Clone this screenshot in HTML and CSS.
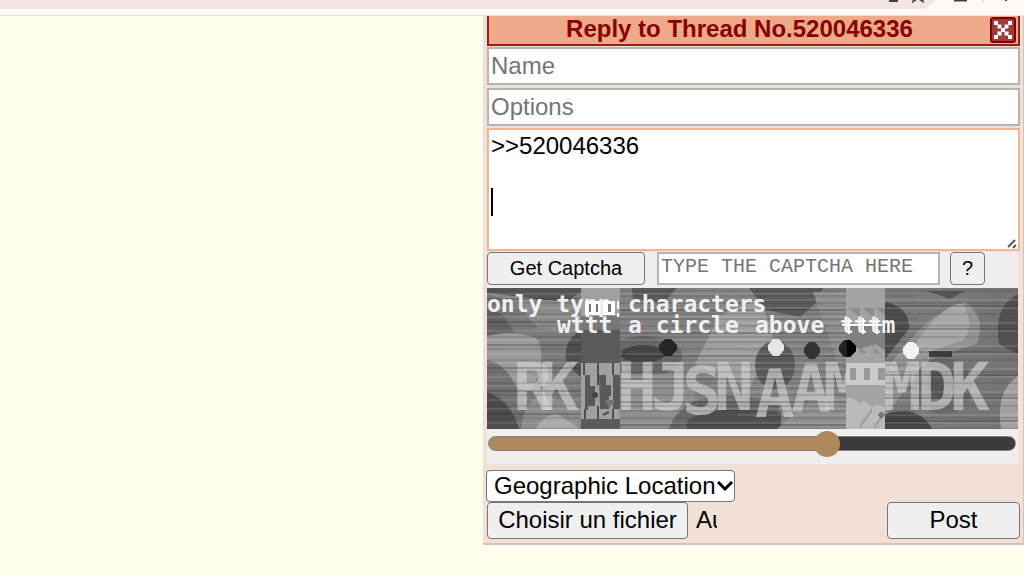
FILE: index.html
```
<!DOCTYPE html>
<html lang="en">

<head>
  <meta charset="UTF-8">
  <meta name="viewport" content="width=device-width, initial-scale=1.0">
  <title>Reply to Thread</title>
  <link rel="stylesheet" href="styles.css">
</head>

<body>

  <!-- Browser toolbar -->
  <header class="toolbar">
    <div class="address-bar">
      <svg class="toolbar-icon" viewBox="0 0 16 16" aria-hidden="true">
        <path d="M1 2v9h6M7 5h7v9H7zM10 11l2-3" />
      </svg>
      <svg class="toolbar-icon" viewBox="0 0 16 16" aria-hidden="true">
        <path d="M8 1l2 5h5l-4 3 1.500 5L8 11l-4.500 3L5 9 1 6h5z" />
      </svg>
    </div>
    <svg class="toolbar-icon" viewBox="0 0 16 16" aria-hidden="true">
      <path d="M3 3v10.500h11V3" />
    </svg>
    <span class="toolbar-divider"></span>
    <svg class="toolbar-icon" viewBox="0 0 16 16" aria-hidden="true">
      <path d="M8 3v11" />
    </svg>
  </header>

  <!-- Quick reply window -->
  <main class="page">
    <form class="quick-reply">
      <div class="reply-header">
        <h1>Reply to Thread No.520046336</h1>
        <button type="button" class="close-button" aria-label="Close">
          <svg viewBox="0 0 26 26" aria-hidden="true">
            <rect x="1" y="1" width="24" height="24" rx="2" fill="#a03a3a" stroke="#800000" stroke-width="2" />
            <path d="M4 4h4v4H4zM18 4h4v4h-4zM7.500 7.500h4v4h-4zM14.500 7.500h4v4h-4zM11 11h4v4h-4zM7.500 14.500h4v4h-4zM14.500 14.500h4v4h-4zM4 18h4v4H4zM18 18h4v4h-4z" fill="#fff" />
          </svg>
        </button>
      </div>

      <input class="field" type="text" placeholder="Name" aria-label="Name">
      <input class="field" type="text" placeholder="Options" aria-label="Options">

      <div class="comment-box">
        <textarea class="comment" aria-label="Comment">&gt;&gt;520046336

</textarea>
        <span class="caret"></span>
        <svg class="grip" viewBox="0 0 10 10" aria-hidden="true">
          <path d="M1 8L8 1M6 9l3-3" />
        </svg>
      </div>

      <!-- Captcha -->
      <div class="captcha">
        <div class="captcha-controls">
          <button type="button" class="button get-captcha">Get Captcha</button>
          <input class="captcha-input" type="text" placeholder="TYPE THE CAPTCHA HERE" aria-label="Captcha">
          <button type="button" class="button help-button">?</button>
        </div>

        <svg class="captcha-image" viewBox="0 0 531 141" role="img" aria-label="Captcha image">
          <defs>
            <linearGradient id="base" x1="0" y1="0" x2="1" y2="0">
              <stop offset="0" stop-color="#777" />
              <stop offset="0.5" stop-color="#858585" />
              <stop offset="1" stop-color="#737373" />
            </linearGradient>
            <pattern id="lines" width="531" height="23" patternUnits="userSpaceOnUse">
              <path d="M0 3h531M130 8h300M0 15h531" stroke="#333" stroke-opacity="0.300" />
              <path d="M0 6h360M250 12h281M0 20h531" stroke="#ddd" stroke-opacity="0.250" />
              <path d="M0 11h130M360 18h171M130 22h230" stroke="#222" stroke-opacity="0.250" stroke-width="2" />
            </pattern>
            <pattern id="teeth" x="359" y="0" width="14" height="30" patternUnits="userSpaceOnUse">
              <path d="M0 0l14 10v20L0 18z" fill="#8d8d8d" />
            </pattern>
          </defs>

          <rect width="531" height="141" fill="url(#base)" />

          <!-- Terrain -->
          <g opacity="0.850">
            <path d="M0 0h100l-18 12H55L0 5z" fill="#505050" />
            <path d="M0 5l30 12 22 24 42 3V15L75 14z" fill="#8d8d8d" />
            <path d="M0 18l15 8 15 22-30 4z" fill="#606060" />
            <path d="M0 48q36-8 52 5 8 30-10 50L0 92z" fill="#a0a0a0" />
            <path d="M0 72q20 4 32 32l20 37H0z" fill="#707070" />
            <path d="M0 104q24 8 32 37H0z" fill="#454545" />
            <path d="M94 42q-20 12-14 35l14 12z" fill="#494949" />
            <path d="M34 141q4-32 24-34l36 14v20z" fill="#909090" />
            <path d="M48 141q12-18 24-14l22 14z" fill="#b0b0b0" />
            <path d="M133 0h70l30 22 26 18-40 36h-86z" fill="#828282" />
            <path d="M145 0h45l-14 15-30-4z" fill="#555" />
            <ellipse cx="157" cy="68" rx="38" ry="20" fill="#656565" />
            <ellipse cx="156" cy="66" rx="22" ry="9" fill="#3c3c3c" />
            <path d="M133 86h60l16 22-24 33h-52z" fill="#929292" />
            <path d="M208 76l24-48 42-18 12 40-23 50z" fill="#a3a3a3" />
            <path d="M262 0h74l-8 16-15 13-34-7z" fill="#555" />
            <path d="M326 4h34v70h-10z" fill="#8f8f8f" />
            <path d="M182 141q8-28 50-34l60 5v29z" fill="#656565" />
            <path d="M200 133q25-18 94-8v16h-94z" fill="#474747" />
            <ellipse cx="288" cy="77" rx="20" ry="24" fill="#555" />
            <path d="M290 141l40-36 29 4v32z" fill="#929292" />
            <path d="M398 0h26l60 6-60 66-26 10z" fill="#7c7c7c" />
            <path d="M398 14q25 5 24 27l-24 30z" fill="#454545" />
            <path d="M398 84q40-60 80-70 22 14 12 42l-46 14-46 58z" fill="#999" />
            <path d="M427 57q35-47 50-40 10 20 0 35l-40 14z" fill="#b0b0b0" />
            <ellipse cx="456" cy="98" rx="30" ry="28" fill="#686868" />
            <ellipse cx="454" cy="94" rx="14" ry="16" fill="#505050" />
            <path d="M531 6q-25 12-19 50l19 10z" fill="#4c4c4c" />
            <path d="M398 126q35-9 47 15h-47z" fill="#3c3c3c" />
            <path d="M514 141q-6-38 17-53v53z" fill="#aaa" />
            <path d="M440 3h38l-15 8z" fill="#505050" />
          </g>

          <!-- Letters -->
          <g class="captcha-letters">
            <text x="26" y="122">R</text>
            <text x="52" y="122">K</text>
            <text x="130" y="122">H</text>
            <text x="164" y="122">J</text>
            <text x="195" y="126">S</text>
            <text x="227" y="122">N</text>
            <text x="268" y="129">A</text>
            <text x="304" y="124">A</text>
            <text x="336" y="122">M</text>
            <text x="395" y="122">M</text>
            <text x="430" y="122">D</text>
            <text x="463" y="122">K</text>
          </g>
          <rect width="531" height="141" fill="url(#lines)" />

          <!-- Shifted strips -->
          <rect x="94" y="0" width="39" height="141" fill="#5a5a5a" />
          <path d="M94 0h39v28H94z" fill="#a0a0a0" />
          <path d="M94 28h39v14H94z" fill="#777" />
          <path d="M94 75h39v56H94z" fill="#a0a0a0" />
          <path d="M98 87h5v11h5v20h-7v4h-3zM112 87h7v10h5v11h-2v13h-9zM126 87h7v34h-7z" fill="#595959" />
          <path d="M97 75v12M111 75v22M126 75v12M98 121v10M111 118v13M126 121v10M116 127l6-3" stroke="#505050" stroke-width="2" fill="none" />
          <path d="M118 112h10l-5 8z" fill="#777" />
          <circle cx="108" cy="107" r="3" fill="#444" />
          <rect x="359" y="0" width="39" height="141" fill="#a3a3a3" />
          <rect x="359" y="20" width="39" height="45" fill="url(#teeth)" />
          <path d="M359 36h39v26l-10-6-14 5-15-4z" fill="#808080" />
          <path d="M359 75h39v22h-39z" fill="#cacaca" />
          <path d="M363 80h6v12h-6zM377 80h6v12h-6zM391 80h7v12h-7z" fill="#999" />
          <path d="M359 112q4-6 14 4 4-6 12 4 4-6 13 0v21h-39z" fill="#bababa" />
          <path d="M373 136l12-16v4l-12 17zM387 137l11-14v4l-11 14z" fill="#a0a0a0" />
          <path d="M394 123l4 4-4 4-3-4z" fill="#777" />

          <!-- Instructions -->
          <g class="captcha-hint">
            <text x="0" y="24">only typp</text>
            <text x="141" y="24">characters</text>
            <text x="70" y="45">wttt</text>
            <text x="141" y="45">a circle</text>
            <text x="268" y="45">above</text>
            <text x="353" y="45">tttm</text>
          </g>
          <path d="M98 13h15v14H98zM116 13h12v14h-12z" fill="#fff" />
          <path d="M102 16h2v8h-2zM109 16h2v8h-2zM121 16h3v8h-3z" fill="#777" />
          <path d="M131 13v8M131 25v4M355 37h40M362 30v16M376 30v16M390 30v16" stroke="#fff" stroke-width="2" />

          <!-- Markers -->
          <g>
            <path d="M178 51h6l6 6v5l-6 6h-6l-6-6v-5z" fill="#262626" />
            <path d="M286 51h6l5 6v5l-5 6h-6l-5-6v-5z" fill="#e6e6e6" />
            <path d="M322 54h6l5 6v5l-5 6h-6l-5-6v-5z" fill="#333" />
            <path d="M357 52h6l6 6v5l-6 6h-6l-5-6v-5z" fill="#222" />
            <path d="M360 52h3l6 6v5l-6 6h-3z" fill="#000" />
            <path d="M421 54h6l5 6v5l-5 6h-6l-5-6v-5z" fill="#f2f2f2" />
            <path d="M442 63h23v6h-23z" fill="#3c3c3c" />
          </g>
        </svg>

        <input class="slider" type="range" min="0" max="100" value="65" aria-label="Captcha alignment">
      </div>

      <!-- Flag, file and submit -->
      <div class="select-box">
        <select class="flag-select" aria-label="Flag">
          <option>Geographic Location</option>
        </select>
        <svg class="chevron" viewBox="0 0 16 10" aria-hidden="true">
          <path d="M1 1l7 7 7-7" />
        </svg>
      </div>
      <div class="reply-footer">
        <input class="file-input" type="file" id="reply-file">
        <label class="button file-button" for="reply-file">Choisir un fichier</label>
        <span class="file-name">Aucun fichier choisi</span>
        <button type="submit" class="button post-button">Post</button>
      </div>
    </form>
  </main>

</body>

</html>
```
FILE: styles.css
```
/* Reset styles */
* {
  margin: 0;
  padding: 0;
  box-sizing: border-box;
}

body {
  min-height: 100vh;
  overflow: hidden;
  background: #ffffee;
  color: #000;
  font-family: "Liberation Sans", Arial, sans-serif;
  font-size: 24px;
}

input,
textarea,
select,
button {
  font-family: inherit;
  font-size: inherit;
}

/* Browser toolbar */
.toolbar {
  display: flex;
  align-items: flex-end;
  height: 16px;
  padding: 0 10px 6px 0;
  background: #fff8f5;
  border-bottom: 1px solid #efe2dc;
}

.address-bar {
  display: flex;
  flex: 1;
  align-items: flex-end;
  justify-content: flex-end;
  gap: 11px;
  height: 24px;
  margin-right: 14px;
  padding: 0 12px 6px 0;
  background: #efe6e2;
  border-radius: 0 0 20px 0;
}

.toolbar-icon {
  flex: none;
  width: 16px;
  height: 16px;
  margin-bottom: 6px;
  fill: none;
  stroke: #4a3d38;
  stroke-width: 2;
}

.address-bar .toolbar-icon {
  margin-bottom: 0;
}

.toolbar-divider {
  width: 2px;
  height: 20px;
  margin: 0 14px;
  margin-bottom: 7px;
  background: #fbdcc0;
}

/* Quick reply window */
.page {
  display: flex;
  justify-content: flex-end;
  overflow: hidden;
}

.quick-reply {
  width: min(100%, 541px);
  padding: 0 3px 4px 4px;
  background: #f0e0d6;
  border: 1px solid #d9bfb7;
  border-width: 0 1px 2px 0;
}

.reply-header {
  display: flex;
  align-items: center;
  height: 30px;
  margin-bottom: 1px;
  padding: 0 4px 0 0;
  background: #eeaa88;
  border: 2px solid #991f1a;
  border-top: 0;
  color: #880000;
}

.reply-header h1 {
  flex: 1;
  padding-bottom: 2px;
  font-size: 24px;
  line-height: 26px;
  text-align: center;
}

.close-button {
  width: 26px;
  height: 26px;
  margin-right: -2px;
  background: none;
  border: 0;
}

.close-button svg {
  display: block;
}

.field {
  display: block;
  width: 100%;
  height: 38px;
  margin-bottom: 3px;
  padding: 0 2px 1px;
  background: #fff;
  border: 2px solid #b4b4b4;
}

::placeholder {
  color: #757575;
}

.comment-box {
  position: relative;
  margin-top: -1px;
  margin-bottom: 1px;
}

.comment {
  display: block;
  width: 100%;
  height: 123px;
  padding: 2px;
  border: 2px solid #f0b496;
  line-height: 28px;
  outline: none;
  resize: none;
}

.caret {
  position: absolute;
  top: 60px;
  left: 4px;
  width: 2px;
  height: 28px;
  background: #000;
}

.grip {
  position: absolute;
  right: 3px;
  bottom: 2px;
  width: 10px;
  height: 10px;
  fill: none;
  stroke: #555;
  stroke-width: 2;
}

/* Buttons */
.button {
  background: #efefef;
  border: 1px solid #767676;
  border-radius: 4px;
  color: #000;
  text-align: center;
}

/* Captcha */
.captcha {
  margin: 0 2px 6px 0;
  padding-bottom: 7px;
  background: #eee;
}

.captcha-controls {
  display: flex;
  height: 33px;
  margin-bottom: 3px;
  padding-right: 33px;
  font-size: 20px;
}

.get-captcha {
  width: 158px;
}

.captcha-input {
  flex: 1;
  min-width: 0;
  margin: 0 10px 0 12px;
  padding: 0 2px 4px;
  border: 2px solid #b4b4b4;
  font-family: "Liberation Mono", "Courier New", monospace;
}

.help-button {
  width: 35px;
}

.captcha-image {
  display: block;
  width: 100%;
}

.captcha-letters {
  fill: #d0d0d0;
  fill-opacity: 0.700;
  font: bold 66px "DejaVu Sans Mono", monospace;
}

.captcha-hint {
  fill: #f0f0f0;
  font: bold 23px "DejaVu Sans Mono", monospace;
}

.slider {
  display: block;
  width: 100%;
  height: 28px;
  padding: 0 2px 0 1px;
  appearance: none;
  background: none;
}

.slider::-webkit-slider-runnable-track {
  height: 15px;
  background: linear-gradient(to right, #ae885f 65%, #3b3b3b 65%);
  border: 1px solid #808080;
  border-radius: 8px;
}

.slider::-webkit-slider-thumb {
  width: 26px;
  height: 26px;
  margin-top: -6px;
  appearance: none;
  background: #ae885f;
  border-radius: 50%;
}

/* Flag, file and submit */
.select-box {
  position: relative;
  width: 249px;
  margin-left: -1px;
}

.flag-select {
  display: block;
  width: 100%;
  height: 32px;
  padding: 0 0 1px 7px;
  appearance: none;
  background: #fff;
  border: 1px solid #767676;
  border-radius: 4px;
  color: #000;
}

.chevron {
  position: absolute;
  top: 11px;
  right: 2px;
  width: 16px;
  height: 10px;
  fill: none;
  pointer-events: none;
  stroke: #000;
  stroke-width: 3;
}

.reply-footer {
  display: flex;
  height: 37px;
}

.file-input {
  width: 0;
  height: 0;
  opacity: 0;
}

.file-button {
  width: 201px;
  line-height: 34px;
}

.file-name {
  width: 21px;
  margin: 0 auto 0 8px;
  overflow: hidden;
  line-height: 36px;
  white-space: nowrap;
}

.post-button {
  width: 133px;
  padding-bottom: 2px;
}
```
